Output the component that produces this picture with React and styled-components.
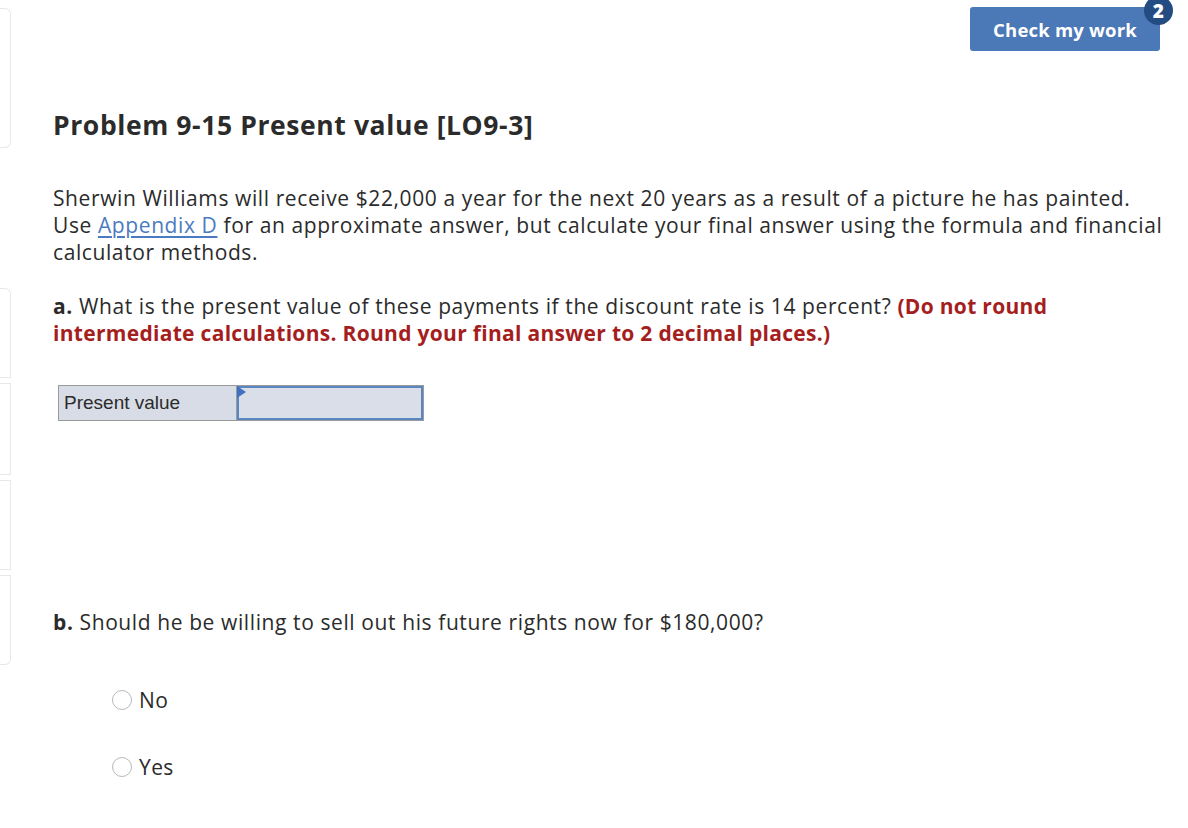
import React from "react";
import styled, { createGlobalStyle } from "styled-components";

const GlobalStyle = createGlobalStyle`
  *, *::before, *::after {
    box-sizing: border-box;
  }
  html, body {
    margin: 0;
    padding: 0;
    background: #ffffff;
  }
  body {
    font-family: "Open Sans", Lato, Arial, sans-serif;
    color: #2b2b2b;
  }
`;

const Page = styled.div`
  display: flex;
  width: 1188px;
  min-height: 828px;
`;

const SideRail = styled.div`
  display: flex;
  flex-direction: column;
  width: 11px;
  flex-shrink: 0;
  padding-top: 8px;
`;

const RailBox = styled.div`
  height: ${({ h }) => h}px;
  margin-top: ${({ gap }) => gap || 0}px;
  border: 1px solid #e8e8e8;
  border-left: none;
  border-radius: ${({ top, bottom }) =>
    `0 ${top ? 6 : 0}px ${bottom ? 6 : 0}px 0`};
`;

const Main = styled.div`
  flex: 1;
  min-width: 0;
  padding: 0 28px 0 42px;
`;

const TopBar = styled.div`
  display: flex;
  justify-content: flex-end;
  padding-top: 7px;
`;

const CheckButton = styled.button`
  position: relative;
  width: 190px;
  height: 44px;
  border: none;
  border-radius: 3px;
  background: #4b78b6;
  color: #ffffff;
  font-family: "Open Sans", Arial, sans-serif;
  font-weight: 700;
  font-size: 18.5px;
  letter-spacing: 0.2px;
  cursor: pointer;
`;

const Badge = styled.span`
  position: absolute;
  top: -11px;
  right: -13px;
  width: 29px;
  height: 29px;
  border-radius: 50%;
  background: #234c82;
  color: #ffffff;
  font-size: 19px;
  font-weight: 800;
  display: flex;
  align-items: center;
  justify-content: center;
`;

const Title = styled.h1`
  margin: 58px 0 0;
  font-size: 26.5px;
  font-weight: 700;
  line-height: 32px;
  letter-spacing: 0.6px;
  color: #2b2b2b;
`;

const Para = styled.p`
  margin: ${({ top }) => top}px 0 0;
  font-size: 21px;
  line-height: 27px;
  letter-spacing: 0.6px;
`;

const Line = styled.span`
  display: block;
  white-space: nowrap;
`;

const Link = styled.a`
  color: #4a7bc0;
  text-decoration: underline;
  text-underline-offset: 3px;
`;

const Strong = styled.b`
  font-weight: 700;
`;

const Warn = styled.b`
  color: #a51e1e;
  font-weight: 700;
  letter-spacing: 0.3px;
`;

const AnswerTable = styled.div`
  display: flex;
  width: 366px;
  height: 36px;
  margin: 38px 0 0 5px;
  border: 1px solid #9a9a9a;
  background: #d7dce6;
`;

const LabelCell = styled.div`
  width: 178px;
  display: flex;
  align-items: center;
  padding-left: 5px;
  border-right: 1px solid #9a9a9a;
  font-family: Arial, "Liberation Sans", sans-serif;
  font-size: 19px;
  color: #2b2b2b;
`;

const InputCell = styled.div`
  position: relative;
  flex: 1;
  border: 2px solid #5a86c2;
  background: #d9dee8;
`;

const Flag = styled.span`
  position: absolute;
  top: -2px;
  left: -2px;
  width: 0;
  height: 0;
  border-top: 6px solid transparent;
  border-bottom: 6px solid transparent;
  border-left: 9px solid #3e72c0;
`;

const Options = styled.div`
  display: flex;
  flex-direction: column;
  gap: 45px;
  margin: 53px 0 0 59px;
`;

const Option = styled.label`
  display: flex;
  align-items: center;
  gap: 7px;
  font-size: 21px;
  line-height: 22px;
  letter-spacing: 0.4px;
`;

const Radio = styled.span`
  width: 20px;
  height: 20px;
  border-radius: 50%;
  border: 1px solid #b8b8b8;
  background: #ffffff;
`;

export default function App() {
  return (
    <>
      <GlobalStyle />
      <Page>
        <SideRail>
          <RailBox h={140} top bottom />
          <RailBox h={90} gap={140} top />
          <RailBox h={92} gap={5} />
          <RailBox h={90} gap={5} />
          <RailBox h={90} gap={5} bottom />
        </SideRail>
        <Main>
          <TopBar>
            <CheckButton>
              Check my work
              <Badge>2</Badge>
            </CheckButton>
          </TopBar>
          <Title>Problem 9-15 Present value [LO9-3]</Title>
          <Para top={44}>
            <Line>
              Sherwin Williams will receive $22,000 a year for the next 20
              years as a result of a picture he has painted.
            </Line>
            <Line>
              Use <Link href="#">Appendix D</Link> for an approximate answer,
              but calculate your final answer using the formula and financial
            </Line>
            <Line>calculator methods.</Line>
          </Para>
          <Para top={27}>
            <Line>
              <Strong>a.</Strong> What is the present value of these payments
              if the discount rate is 14 percent? <Warn>(Do not round</Warn>
            </Line>
            <Line>
              <Warn>
                intermediate calculations. Round your final answer to 2 decimal
                places.)
              </Warn>
            </Line>
          </Para>
          <AnswerTable>
            <LabelCell>Present value</LabelCell>
            <InputCell>
              <Flag />
            </InputCell>
          </AnswerTable>
          <Para top={188}>
            <Strong>b.</Strong> Should he be willing to sell out his future
            rights now for $180,000?
          </Para>
          <Options>
            <Option>
              <Radio />
              No
            </Option>
            <Option>
              <Radio />
              Yes
            </Option>
          </Options>
        </Main>
      </Page>
    </>
  );
}
